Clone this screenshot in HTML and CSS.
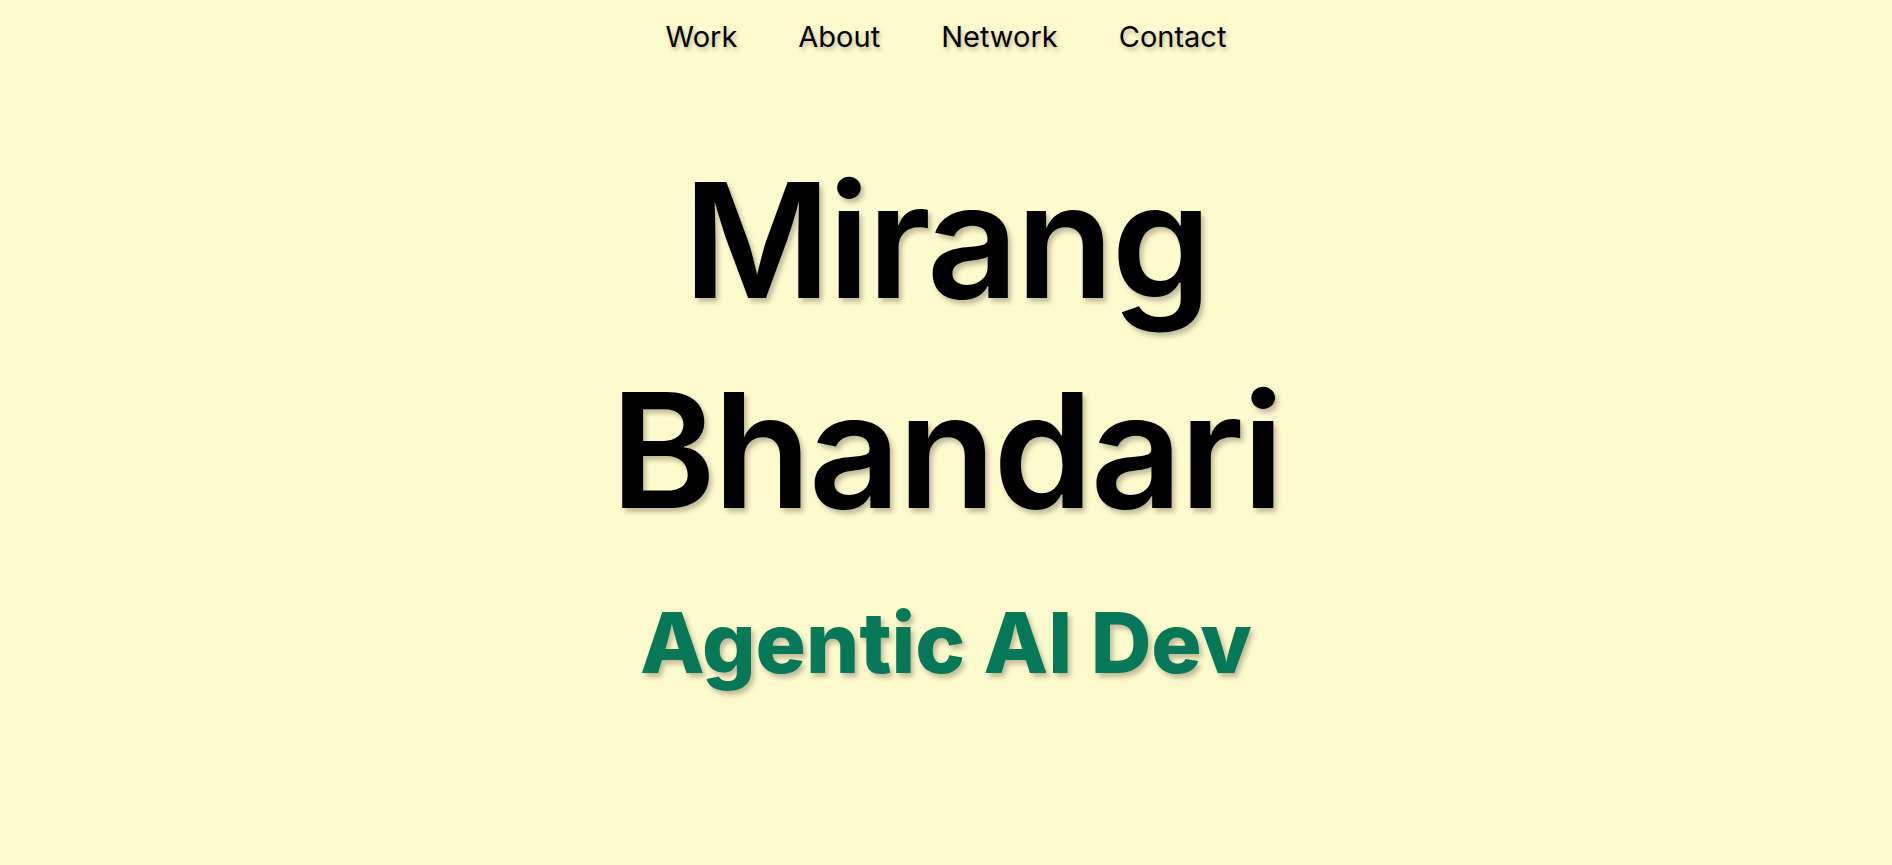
FILE: index.html
```html
<!DOCTYPE html>
<html lang="en">
<head>
<meta charset="utf-8">
<title>Mirang Bhandari</title>
<link rel="stylesheet" href="styles.css">
</head>
<body>
  <nav class="nav">
    <a class="nav-link" href="#work">Work</a>
    <a class="nav-link" href="#about">About</a>
    <a class="nav-link" href="#network">Network</a>
    <a class="nav-link" href="#contact">Contact</a>
  </nav>
  <main class="hero">
    <h1 class="hero-name">Mirang<br>Bhandari</h1>
    <h2 class="hero-role">Agentic AI Dev</h2>
  </main>
</body>
</html>
```

FILE: styles.css
```css
html, body {
  margin: 0;
  padding: 0;
}
body {
  background: #fffacd;
  font-family: Inter, "Noto Sans", sans-serif;
  color: #000;
  height: 865px;
  overflow: hidden;
}
.nav {
  display: flex;
  justify-content: center;
  gap: 61px;
  padding-top: 13px;
}
.nav-link {
  color: #000;
  text-decoration: none;
  font-size: 29px;
  line-height: 48px;
  text-shadow: 2px 3px 4px rgba(0, 0, 0, 0.25);
}
.hero {
  display: flex;
  flex-direction: column;
  align-items: center;
  text-align: center;
}
.hero-name {
  margin: 74px 0 0;
  font-size: 160px;
  font-weight: 600;
  line-height: 210px;
  letter-spacing: -2.6px;
  text-shadow: 3px 4px 5px rgba(0, 0, 0, 0.25);
}
.hero-role {
  margin: 38px 0 0;
  font-size: 84px;
  font-weight: 800;
  line-height: 1.2;
  letter-spacing: 0;
  color: #047857;
  text-shadow: 3px 4px 5px rgba(0, 0, 0, 0.25);
}
```
